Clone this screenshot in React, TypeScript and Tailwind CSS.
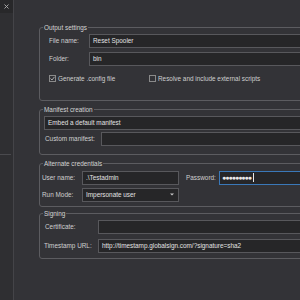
import React from 'react';

const font = { fontFamily: '"Liberation Sans", Arial, sans-serif' };

const Field: React.FC<{ value?: string; className?: string }> = ({ value = '', className = '' }) => (
  <div className={`h-[14px] bg-[#262628] border border-[#58585c] flex items-center pl-[3px] text-[#e2e2e2] whitespace-nowrap overflow-hidden ${className}`}>
    {value}
  </div>
);

const Check: React.FC<{ checked?: boolean; label: string }> = ({ checked, label }) => (
  <div className="flex items-center gap-[2px] whitespace-nowrap">
    <div className="w-[7px] h-[7px] border border-[#8a8a8a] flex items-center justify-center">
      {checked && (
        <svg width="5" height="5" viewBox="0 0 5 5">
          <path d="M0.5 2.5 L2 4 L4.5 0.8" stroke="#c8c8c8" strokeWidth="0.8" fill="none" />
        </svg>
      )}
    </div>
    <span>{label}</span>
  </div>
);

const Group: React.FC<{ title: string; className?: string; children: React.ReactNode }> = ({ title, className = '', children }) => (
  <fieldset className={`w-[300px] border border-[#5c5c60] rounded-[3px] p-0 m-0 ${className}`}>
    <legend className="ml-[3px] px-[1px] leading-[9px] text-[#d4d4d4]">{title}</legend>
    {children}
  </fieldset>
);

export default function App() {
  return (
    <div className="w-[300px] h-[300px] overflow-hidden flex bg-[#333337] text-[6.4px] text-[#cfcfcf]" style={font}>
      {/* left dock strip */}
      <div className="w-[14px] h-full flex flex-col bg-[#2f2f32] border-r border-[#444448] shrink-0">
        <div className="w-[13px] h-[13px] bg-[#28282a] flex items-center justify-center">
          <svg width="5" height="5" viewBox="0 0 5 5">
            <path d="M0.5 0.5 L4.5 4.5 M4.5 0.5 L0.5 4.5" stroke="#b0b0b0" strokeWidth="0.9" />
          </svg>
        </div>
        <div className="w-[11px] h-[142px] border-b border-[#4a4a4e]" />
      </div>

      {/* main options */}
      <div className="flex-1 min-w-0 pl-[25px] pt-[23px] flex flex-col">
        <Group title="Output settings">
          <div className="pl-[9px] pt-[2px] pb-[16px] flex flex-col">
            <div className="flex items-center">
              <span className="w-[40px] shrink-0">File name:</span>
              <Field value="Reset Spooler" className="flex-1" />
            </div>
            <div className="flex items-center mt-[4px]">
              <span className="w-[40px] shrink-0">Folder:</span>
              <Field value="bin" className="flex-1" />
            </div>
            <div className="flex items-center mt-[8px]">
              <div className="w-[100px] shrink-0">
                <Check checked label="Generate .config file" />
              </div>
              <Check label="Resolve and include external scripts" />
            </div>
          </div>
        </Group>

        <Group title="Manifest creation" className="mt-[4px]">
          <div className="pl-[4px] pt-[2px] pb-[8px] flex flex-col">
            <Field value="Embed a default manifest" />
            <div className="flex items-center mt-[2px]">
              <span className="w-[57px] shrink-0 pl-[1px]">Custom manifest:</span>
              <Field className="flex-1" />
            </div>
          </div>
        </Group>

        <Group title="Alternate credentials" className="mt-[4px]">
          <div className="pl-[2px] pt-[3px] pb-[4px] flex flex-col">
            <div className="flex items-center">
              <span className="w-[40px] shrink-0">User name:</span>
              <Field value=".\Testadmin" className="w-[97px] shrink-0" />
              <span className="w-[40px] shrink-0 pl-[7px]">Password:</span>
              <div className="flex-1 h-[14px] bg-[#262628] border border-[#3a78b8] flex items-center pl-[2px] text-[#e8e8e8] whitespace-nowrap">
                <span className="text-[7px] leading-none tracking-[-1px]">●●●●●●●●●</span>
                <span className="w-px h-[9px] bg-[#e8e8e8] ml-[2px]" />
              </div>
            </div>
            <div className="flex items-center mt-[3px]">
              <span className="w-[40px] shrink-0">Run Mode:</span>
              <div className="w-[97px] h-[14px] bg-[#262628] border border-[#58585c] flex items-center justify-between pl-[3px] pr-[4px] text-[#e2e2e2]">
                <span>Impersonate user</span>
                <svg width="4" height="3" viewBox="0 0 4 3">
                  <path d="M0 0.5 L4 0.5 L2 2.5 Z" fill="#c8c8c8" />
                </svg>
              </div>
            </div>
          </div>
        </Group>

        <Group title="Signing" className="mt-[2px]">
          <div className="pl-[4px] pt-[2px] pb-[5px] flex flex-col">
            <div className="flex items-center">
              <span className="w-[54px] shrink-0 pl-[1px]">Certificate:</span>
              <Field className="flex-1 h-[13px]" />
            </div>
            <div className="flex items-center mt-[5px]">
              <span className="w-[54px] shrink-0">Timestamp URL:</span>
              <Field value="http://timestamp.globalsign.com/?signature=sha2" className="flex-1 h-[13px]" />
            </div>
          </div>
        </Group>
      </div>
    </div>
  );
}
